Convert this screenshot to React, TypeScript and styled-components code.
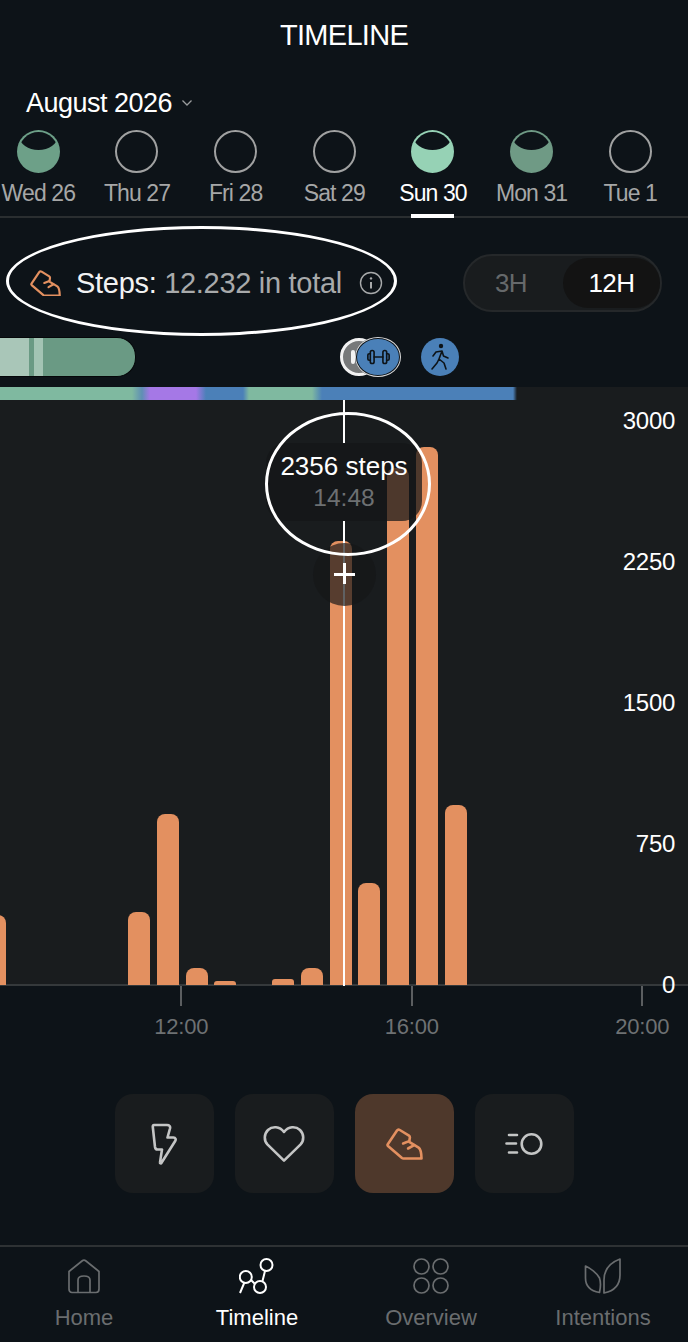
import React from 'react';
import styled, { createGlobalStyle } from 'styled-components';

const GlobalStyle = createGlobalStyle`
  html, body {
    margin: 0;
    padding: 0;
    background: #0d1318;
  }
  * {
    box-sizing: border-box;
  }
`;

const Page = styled.div`
  position: relative;
  width: 688px;
  height: 1342px;
  overflow: hidden;
  background: #0d1318;
  color: #fff;
  font-family: 'Liberation Sans', Arial, sans-serif;
`;

const Title = styled.h1`
  margin: 0;
  height: 84px;
  padding-top: 19px;
  font-size: 29px;
  line-height: 32px;
  letter-spacing: -0.7px;
  font-weight: 400;
  text-align: center;
`;

const MonthRow = styled.div`
  display: flex;
  align-items: center;
  gap: 9px;
  height: 46px;
  padding: 0 0 8px 26px;
  font-size: 27px;
  line-height: 38px;
  letter-spacing: -0.5px;
`;

const DayStrip = styled.div`
  display: grid;
  grid-template-columns: repeat(7, 98.67px);
  margin-left: -11px;
  width: 700px;
  height: 86px;
  position: relative;
`;

const Divider = styled.div`
  height: 2px;
  background: #2a2e30;
`;

const Day = styled.div<{ $active?: boolean }>`
  position: relative;
  display: flex;
  flex-direction: column;
  align-items: center;
  gap: 5px;
  font-size: 23px;
  line-height: 30px;
  letter-spacing: -0.9px;
  color: ${(p) => (p.$active ? '#fff' : '#a6a7a7')};
`;

const ActiveMark = styled.span`
  position: absolute;
  left: 27px;
  bottom: -2px;
  width: 43px;
  height: 4px;
  background: #fff;
  z-index: 1;
`;

const SummaryRow = styled.div`
  display: flex;
  align-items: center;
  justify-content: space-between;
  height: 119px;
  padding: 11px 26px 0 30px;
`;

const SummaryText = styled.div`
  display: flex;
  align-items: center;
  gap: 15px;
  font-size: 29px;
  line-height: 34px;
  letter-spacing: -0.3px;
  color: #a8aaab;
`;

const SummaryLabel = styled.span`
  color: #f2f2f2;
`;

const InfoWrap = styled.span`
  display: flex;
  margin-left: 2px;
`;

const RangeSwitch = styled.div`
  display: flex;
  width: 199px;
  height: 58px;
  padding: 2px 0 2px 2px;
  border: 2px solid #25282a;
  border-radius: 29px;
  background: #191c1e;
`;

const RangeOption = styled.div<{ $active?: boolean }>`
  flex: none;
  width: ${(p) => (p.$active ? '97px' : '96px')};
  display: flex;
  align-items: center;
  justify-content: center;
  border-radius: 26px;
  padding-right: ${(p) => (p.$active ? '0' : '8px')};
  font-size: 26px;
  letter-spacing: -0.5px;
  color: ${(p) => (p.$active ? '#fff' : '#66696b')};
  background: ${(p) => (p.$active ? '#131313' : 'transparent')};
`;

const ActivityRow = styled.div`
  display: flex;
  align-items: center;
  height: 40px;
`;

const SleepPill = styled.div`
  display: flex;
  width: 136px;
  height: 40px;
  overflow: hidden;
  border: 1px solid #050709;
  border-left: none;
  border-radius: 0 19px 19px 0;
  background: #6a9a84;
`;

const SleepSegment = styled.span<{ $width: number; $color: string }>`
  width: ${(p) => p.$width}px;
  background: ${(p) => p.$color};
`;

const Bubble = styled.div<{ $color: string }>`
  display: flex;
  align-items: center;
  justify-content: center;
  width: 38px;
  height: 38px;
  border-radius: 50%;
  background: ${(p) => p.$color};
`;

const GreyBubble = styled(Bubble)`
  justify-content: flex-start;
  margin-left: 204px;
  padding-left: 8px;
  border: 3px solid #f2f2f2;
`;

const GreyGlyph = styled.span`
  width: 4px;
  height: 14px;
  border-radius: 2px;
  background: #f2f2f2;
`;

const GymBubble = styled.div`
  display: flex;
  align-items: center;
  justify-content: center;
  margin-left: -23px;
  width: 46px;
  height: 40px;
  border-radius: 50%;
  background: #4a80b8;
  border: 2px solid #0d1318;
  outline: 1px solid #d8d8d8;
  outline-offset: -1px;
`;

const WalkBubble = styled(Bubble)`
  margin-left: 20px;
`;

const StageBar = styled.div`
  height: 13px;
  margin-top: 10px;
  background: linear-gradient(
    90deg,
    #7fb9a0 0,
    #7fb9a0 132px,
    #5f8fb4 142px,
    #a578e6 150px,
    #a578e6 196px,
    #4b80b8 206px,
    #4b80b8 243px,
    #7fb9a0 249px,
    #7fb9a0 312px,
    #4b80b8 322px,
    #4b80b8 513px,
    #191c1e 517px
  );
`;

const Chart = styled.div`
  position: relative;
  height: 586px;
  background: #191c1e;
  border-bottom: 2px solid #35393b;
`;

const Bars = styled.div`
  position: absolute;
  left: -16px;
  bottom: -1px;
  display: flex;
  align-items: flex-end;
  gap: 6.8px;
`;

const Bar = styled.div<{ $height: number }>`
  width: 22px;
  height: ${(p) => p.$height}px;
  border-radius: ${(p) => (p.$height < 8 ? '3px 3px 0 0' : '8px 8px 0 0')};
  background: ${(p) => (p.$height ? '#e39060' : 'transparent')};
`;

const ScaleLabels = styled.div`
  position: absolute;
  top: 8px;
  right: 13px;
  bottom: -13px;
  display: flex;
  flex-direction: column;
  justify-content: space-between;
  align-items: flex-end;
  font-size: 24px;
  line-height: 25px;
  letter-spacing: -0.3px;
`;

const CrossLine = styled.div<{ $top: number; $height: number }>`
  position: absolute;
  left: 343px;
  top: ${(p) => p.$top}px;
  width: 2px;
  height: ${(p) => p.$height}px;
  background: #fff;
`;

const Tooltip = styled.div`
  position: absolute;
  left: 266px;
  top: 43px;
  width: 156px;
  height: 78px;
  padding-top: 7px;
  border-radius: 20px;
  background: rgba(20, 22, 24, 0.72);
  text-align: center;
  font-size: 26px;
  line-height: 32px;
`;

const TooltipTime = styled.div`
  font-size: 24.5px;
  color: #6d7072;
`;

const PlusHandle = styled.div`
  position: absolute;
  left: 313px;
  top: 143px;
  width: 63px;
  height: 63px;
  border-radius: 50%;
  background: rgba(20, 22, 24, 0.68);
`;

const PlusBar = styled.span<{ $vertical?: boolean }>`
  position: absolute;
  background: #fff;
  left: ${(p) => (p.$vertical ? '30px' : '21px')};
  top: ${(p) => (p.$vertical ? '20px' : '30px')};
  width: ${(p) => (p.$vertical ? '2.5px' : '21px')};
  height: ${(p) => (p.$vertical ? '21px' : '2.5px')};
`;

const TimeAxis = styled.div`
  display: flex;
  margin-left: 66px;
  width: 700px;
  height: 108px;
`;

const TimeTick = styled.div`
  flex: none;
  width: 230.5px;
  display: flex;
  flex-direction: column;
  align-items: center;
  font-size: 22px;
  line-height: 26px;
  letter-spacing: -0.2px;
  color: #6e7173;

  &::before {
    content: '';
    width: 2px;
    height: 20px;
    margin-bottom: 8px;
    background: #5b5e60;
  }
`;

const ActionRow = styled.div`
  display: flex;
  justify-content: center;
  gap: 21px;
`;

const ActionButton = styled.div<{ $active?: boolean }>`
  display: flex;
  align-items: center;
  justify-content: center;
  width: 99px;
  height: 99px;
  border-radius: 18px;
  background: ${(p) => (p.$active ? '#4e382b' : '#191c1e')};
`;

const TabBar = styled.nav`
  position: absolute;
  left: 0;
  right: 0;
  bottom: 0;
  height: 97px;
  display: grid;
  grid-template-columns: 168px 178px 170px 174px;
  padding: 11px 0 0;
  border-top: 2px solid #2e3234;
`;

const Tab = styled.div<{ $active?: boolean }>`
  display: flex;
  flex-direction: column;
  align-items: center;
  gap: 9px;
  font-size: 22px;
  line-height: 30px;
  color: ${(p) => (p.$active ? '#fff' : '#6a6d6f')};
`;

const Ring = styled.div<{ $left: number; $top: number; $width: number; $height: number }>`
  position: absolute;
  left: ${(p) => p.$left}px;
  top: ${(p) => p.$top}px;
  width: ${(p) => p.$width}px;
  height: ${(p) => p.$height}px;
  border: 3.5px solid #fff;
  border-radius: 50%;
  pointer-events: none;
`;

const days = [
  { label: 'Wed 26', fill: '#6da088' },
  { label: 'Thu 27' },
  { label: 'Fri 28' },
  { label: 'Sat 29' },
  { label: 'Sun 30', fill: '#96d2b5', active: true },
  { label: 'Mon 31', fill: '#6f9a85' },
  { label: 'Tue 1' },
];

const barHeights = [70, 0, 0, 0, 0, 73, 171, 17, 4, 0, 6, 17, 444, 102, 517, 538, 180];

const MoonIcon = ({ fill, id }: { fill?: string; id: string }) => (
  <svg width="43" height="43" viewBox="0 0 43 43">
    {fill ? (
      <>
        <clipPath id={id}>
          <circle cx="21.5" cy="21.5" r="19.5" />
        </clipPath>
        <circle cx="21.5" cy="21.5" r="21.5" fill={fill} />
        <ellipse cx="21.5" cy="6.5" rx="19" ry="13.5" fill="#0d1318" clipPath={`url(#${id})`} />
      </>
    ) : (
      <circle cx="21.5" cy="21.5" r="20.5" fill="none" stroke="#a0a1a1" strokeWidth="2" />
    )}
  </svg>
);

const ShoeIcon = ({ size = 37 }: { size?: number }) => (
  <svg width={size} height={(size * 32) / 37} viewBox="0 0 37 32" fill="none" stroke="#e39060" strokeWidth="2.6" strokeLinejoin="round" strokeLinecap="round">
    <path d="M13.8 2 L23 7.6 C23.9 8.2 24 9 23.8 10 L23.2 13.8 L32.6 19.6 C34.6 21 35.4 25 35.5 30.5 L17.4 30.5 C16.8 30.5 16.4 30.3 16 30 L2 18 C1.4 17.4 1.4 16.8 1.8 16.2 L11 2.6 C11.7 1.6 12.8 1.4 13.8 2 Z" />
    <path d="M17.1 15.5 L23.1 13.1 M22.1 20.5 L28.1 17.1" />
  </svg>
);

const App = () => {
  return (
    <Page>
      <GlobalStyle />
      <Title>TIMELINE</Title>
      <MonthRow>
        August 2026
        <svg width="12" height="8" viewBox="0 0 12 8" fill="none" stroke="#9a9c9d" strokeWidth="1.3">
          <path d="M1.5 1.5 L6 6 L10.5 1.5" />
        </svg>
      </MonthRow>
      <DayStrip>
        {days.map((day, i) => (
          <Day key={day.label} $active={day.active}>
            <MoonIcon fill={day.fill} id={`moon-${i}`} />
            {day.label}
            {day.active && <ActiveMark />}
          </Day>
        ))}
      </DayStrip>
      <Divider />
      <SummaryRow>
        <SummaryText>
          <ShoeIcon size={31} />
          <span>
            <SummaryLabel>Steps:</SummaryLabel> 12.232 in total
          </span>
          <InfoWrap>
            <svg width="24" height="24" viewBox="0 0 24 24" fill="none" stroke="#a8aaab" strokeWidth="1.4">
              <circle cx="12" cy="12" r="10.5" />
              <path d="M12 11 V17.5" strokeWidth="2" />
              <circle cx="12" cy="7.4" r="1.2" fill="#a8aaab" stroke="none" />
            </svg>
          </InfoWrap>
        </SummaryText>
        <RangeSwitch>
          <RangeOption>3H</RangeOption>
          <RangeOption $active>12H</RangeOption>
        </RangeSwitch>
      </SummaryRow>
      <ActivityRow>
        <SleepPill>
          <SleepSegment $width={29} $color="#a9c6b8" />
          <SleepSegment $width={5} $color="#6a9a84" />
          <SleepSegment $width={9} $color="#a3c4b4" />
        </SleepPill>
        <GreyBubble $color="#77797a">
          <GreyGlyph />
        </GreyBubble>
        <GymBubble>
          <svg width="25" height="18" viewBox="0 0 30 22" fill="none" stroke="#0d1318" strokeWidth="2" strokeLinecap="round" strokeLinejoin="round">
            <rect x="5" y="3" width="4.6" height="16" rx="2.2" />
            <rect x="20.4" y="3" width="4.6" height="16" rx="2.2" />
            <path d="M5 7 H3.6 A1.6 1.6 0 0 0 2 8.6 V13.4 A1.6 1.6 0 0 0 3.6 15 H5 M25 7 H26.4 A1.6 1.6 0 0 1 28 8.6 V13.4 A1.6 1.6 0 0 1 26.4 15 H25 M9.6 11 H20.4" />
          </svg>
        </GymBubble>
        <WalkBubble $color="#4a80b8">
          <svg width="24" height="28" viewBox="0 0 24 28" fill="none" stroke="#0d1318" strokeWidth="1.6" strokeLinecap="round" strokeLinejoin="round">
            <circle cx="13" cy="3" r="2.2" fill="#0d1318" stroke="none" />
            <path d="M5 13 L8 9 L14 8 L15.5 13 L20 15 M14 8 L11 16 L16 20 L18 26 M11 16 L9 20 L4 26" />
          </svg>
        </WalkBubble>
      </ActivityRow>
      <StageBar />
      <Chart>
        <Bars>
          {barHeights.map((height, i) => (
            <Bar key={i} $height={height} />
          ))}
        </Bars>
        <ScaleLabels>
          <span>3000</span>
          <span>2250</span>
          <span>1500</span>
          <span>750</span>
          <span>0</span>
        </ScaleLabels>
        <CrossLine $top={0} $height={43} />
        <CrossLine $top={121} $height={465} />
        <PlusHandle>
          <PlusBar />
          <PlusBar $vertical />
        </PlusHandle>
        <Tooltip>
          2356 steps
          <TooltipTime>14:48</TooltipTime>
        </Tooltip>
      </Chart>
      <TimeAxis>
        <TimeTick>12:00</TimeTick>
        <TimeTick>16:00</TimeTick>
        <TimeTick>20:00</TimeTick>
      </TimeAxis>
      <ActionRow>
        <ActionButton>
          <svg width="26" height="42" viewBox="0 0 26 42" fill="none" stroke="#c4c5c5" strokeWidth="2.6" strokeLinejoin="round" strokeLinecap="round">
            <path d="M3 2 H16 C18.5 2 19.5 3.5 19 5.5 L16.5 14.5 H22.5 C24.6 14.5 25.2 16.4 24.2 18 L10.5 39.8 C10 40.8 8.8 40.4 9 39.4 L11 26.5 H6.5 C5 26.5 4.2 25.5 4 24 L1.8 4 C1.7 2.8 2 2 3 2 Z" />
          </svg>
        </ActionButton>
        <ActionButton>
          <svg width="42" height="38" viewBox="0 0 42 38" fill="none" stroke="#c4c5c5" strokeWidth="2.6" strokeLinejoin="round">
            <path d="M21 35.6 L4.6 19.6 C0.6 15.4 1 9 5 5 C9.4 0.8 16.6 1.2 21 7 C25.4 1.2 32.6 0.8 37 5 C41 9 41.4 15.4 37.4 19.6 Z" />
          </svg>
        </ActionButton>
        <ActionButton $active>
          <ShoeIcon />
        </ActionButton>
        <ActionButton>
          <svg width="38" height="24" viewBox="0 0 38 24" fill="none" stroke="#c4c5c5" strokeWidth="2.6" strokeLinecap="round">
            <circle cx="26.5" cy="12" r="9.8" />
            <path d="M4 3 H12 M1.5 11.5 H11 M4 20.5 H12" />
          </svg>
        </ActionButton>
      </ActionRow>
      <TabBar>
        <Tab>
          <svg width="34" height="36" viewBox="0 0 34 36" fill="none" stroke="#6a6d6f" strokeWidth="1.7" strokeLinejoin="round">
            <path d="M2 13.5 L15 3 C16 2.2 18 2.2 19 3 L32 13.5 V31 C32 33 31 34.5 29 34.5 H5 C3 34.5 2 33 2 31 Z" />
            <path d="M11 34.5 V22 C11 19.5 13 18 17 18 C21 18 23 19.5 23 22 V34.5" />
          </svg>
          Home
        </Tab>
        <Tab $active>
          <svg width="36" height="36" viewBox="0 0 36 36" fill="none" stroke="#fff" strokeWidth="2">
            <circle cx="6.8" cy="19" r="6" />
            <circle cx="27.5" cy="7" r="6" />
            <circle cx="21" cy="29" r="6" />
            <path d="M5.2 25 L1 35 M12 22 L15.5 25.5 M26 13 L23.5 23" />
          </svg>
          Timeline
        </Tab>
        <Tab>
          <svg width="36" height="36" viewBox="0 0 36 36" fill="none" stroke="#6a6d6f" strokeWidth="1.7">
            <circle cx="8.5" cy="8.5" r="7.5" />
            <circle cx="27.5" cy="8.5" r="7.5" />
            <circle cx="8.5" cy="27.5" r="7.5" />
            <circle cx="27.5" cy="27.5" r="7.5" />
          </svg>
          Overview
        </Tab>
        <Tab>
          <svg width="38" height="36" viewBox="0 0 38 36" fill="none" stroke="#6a6d6f" strokeWidth="1.7" strokeLinejoin="round">
            <path d="M1.5 8 C6 10 13 15 15.5 20 C16.5 23 16.5 30 15.5 34.5 C7 33 1.5 28 1.5 20 Z" />
            <path d="M36 1 C28 4 20 10 20 22 V35 C30 33 36 27 36 17 Z" />
          </svg>
          Intentions
        </Tab>
      </TabBar>
      <Ring $left={6} $top={226} $width={391} $height={110} />
      <Ring $left={265} $top={412} $width={166} $height={144} />
    </Page>
  );
};

export default App;
